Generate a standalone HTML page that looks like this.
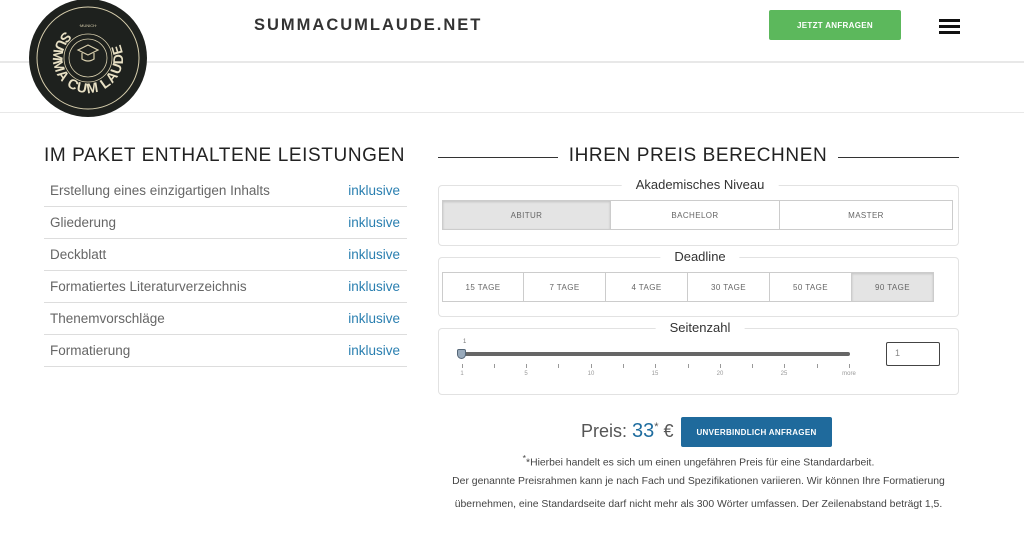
<!DOCTYPE html>
<html><head><meta charset="utf-8"><style>
*{margin:0;padding:0;box-sizing:border-box}
body{width:1024px;height:551px;background:#fff;font-family:"Liberation Sans",sans-serif;position:relative;overflow:hidden;color:#555}
.a{position:absolute}
.hl{position:absolute;left:0;width:1024px;height:2px;background:#e8e8e8}
.row{position:absolute;left:44px;width:363px;height:32px;border-bottom:1px solid #ddd;font-size:13.5px;color:#666}
.row span{position:absolute;left:6px;top:8px}
.row b{position:absolute;right:7px;top:8px;font-weight:normal;color:#2a7fb0}
.box{position:absolute;left:438px;width:521px;border:1px solid #e2e2e2;border-radius:4px}
.lg{position:absolute;background:#fff;font-size:13px;color:#333;padding:0 14px;transform:translateX(-50%);top:-9px;white-space:nowrap}
.btn{position:absolute;top:0;height:30px;border:1px solid #ccc;font-size:8px;letter-spacing:.4px;color:#666;display:flex;align-items:center;justify-content:center;background:#fff}
.on{background:#e4e4e4;box-shadow:inset 0 1px 2px rgba(0,0,0,.15)}
.tk{position:absolute;top:364px;width:1px;height:4px;background:#999}
.tl{position:absolute;top:371px;font-size:6px;color:#999;transform:translateX(-50%)}
.nt{position:absolute;left:428px;width:541px;text-align:center;font-size:10.4px;color:#444;white-space:nowrap}
</style></head><body>
<div class="hl" style="top:61px"></div>
<div class="hl" style="top:112px;height:1px"></div>
<svg class="a" style="left:28px;top:-2px" width="120" height="120" viewBox="0 0 120 120">
<defs><path id="cp" d="M60 60 m-35 0 a35 35 0 1 0 70 0 a35 35 0 1 0 -70 0"/></defs>
<circle cx="60" cy="60" r="59" fill="#1e211e"/>
<circle cx="60" cy="60" r="51" fill="none" stroke="#d8cfae" stroke-width="1"/>
<circle cx="60" cy="60" r="24" fill="none" stroke="#d8cfae" stroke-width="0.8"/>
<circle cx="60" cy="60" r="19" fill="none" stroke="#d8cfae" stroke-width="0.8"/>
<path d="M50 52 L60 47 L70 52 L60 57Z M54 55 v6 q6 4 12 0 v-6" fill="none" stroke="#d8cfae" stroke-width="1.2"/>
<text x="60" y="29" font-size="4" fill="#d8cfae" text-anchor="middle">·MUNICH·</text>
<text font-size="14" fill="#e8e0c4" font-weight="bold" letter-spacing="1" transform="rotate(50 60 60)"><textPath href="#cp">SUMMA CUM LAUDE</textPath></text>
</svg>
<div class="a" style="left:254px;top:16px;font-size:16.5px;font-weight:bold;letter-spacing:2px;color:#333">SUMMACUMLAUDE.NET</div>
<div class="a" style="left:769px;top:10px;width:132px;height:30px;background:#5cb85c;border-radius:2px;color:#fff;font-size:8px;font-weight:bold;display:flex;align-items:center;justify-content:center;letter-spacing:.3px">JETZT ANFRAGEN</div>
<div class="a" style="left:939px;top:19px;width:21px;height:3px;background:#111"></div>
<div class="a" style="left:939px;top:25px;width:21px;height:3px;background:#111"></div>
<div class="a" style="left:939px;top:31px;width:21px;height:3px;background:#111"></div>

<div class="a" style="left:44px;top:145px;font-size:19px;color:#222;letter-spacing:.6px">IM PAKET ENTHALTENE LEISTUNGEN</div>
<div class="row" style="top:175px"><span>Erstellung eines einzigartigen Inhalts</span><b>inklusive</b></div>
<div class="row" style="top:207px"><span>Gliederung</span><b>inklusive</b></div>
<div class="row" style="top:239px"><span>Deckblatt</span><b>inklusive</b></div>
<div class="row" style="top:271px"><span>Formatiertes Literaturverzeichnis</span><b>inklusive</b></div>
<div class="row" style="top:303px"><span>Thenemvorschläge</span><b>inklusive</b></div>
<div class="row" style="top:335px"><span>Formatierung</span><b>inklusive</b></div>

<div class="a" style="left:438px;top:157px;width:120px;height:1px;background:#333"></div>
<div class="a" style="left:838px;top:157px;width:121px;height:1px;background:#333"></div>
<div class="a" style="left:558px;top:145px;width:280px;text-align:center;font-size:19px;color:#222;letter-spacing:.6px">IHREN PREIS BERECHNEN</div>

<div class="box" style="top:185px;height:61px"><div class="lg" style="left:261px">Akademisches Niveau</div>
<div class="btn on" style="left:3px;top:14px;width:169px">ABITUR</div>
<div class="btn" style="left:171px;top:14px;width:170px">BACHELOR</div>
<div class="btn" style="left:340px;top:14px;width:174px">MASTER</div></div>

<div class="box" style="top:257px;height:60px"><div class="lg" style="left:261px">Deadline</div>
<div class="btn" style="left:3px;top:14px;width:82px">15 TAGE</div>
<div class="btn" style="left:84px;top:14px;width:83px">7 TAGE</div>
<div class="btn" style="left:166px;top:14px;width:83px">4 TAGE</div>
<div class="btn" style="left:248px;top:14px;width:83px">30 TAGE</div>
<div class="btn" style="left:330px;top:14px;width:83px">50 TAGE</div>
<div class="btn on" style="left:412px;top:14px;width:83px">90 TAGE</div></div>

<div class="box" style="top:328px;height:67px"><div class="lg" style="left:261px">Seitenzahl</div></div>
<div class="a" style="left:463px;top:339px;font-size:6px;color:#777">1</div>
<div class="a" style="left:459px;top:352px;width:391px;height:4px;background:#666;border-radius:2px"></div>
<div class="a" style="left:457px;top:349px;width:9px;height:10px;background:#9ab;border:1px solid #567;border-radius:2px 2px 5px 5px"></div>
<div class="tk" style="left:462px"></div><div class="tk" style="left:494px"></div><div class="tk" style="left:526px"></div><div class="tk" style="left:558px"></div><div class="tk" style="left:591px"></div><div class="tk" style="left:623px"></div><div class="tk" style="left:655px"></div><div class="tk" style="left:688px"></div><div class="tk" style="left:720px"></div><div class="tk" style="left:752px"></div><div class="tk" style="left:784px"></div><div class="tk" style="left:817px"></div><div class="tk" style="left:849px"></div>
<div class="tl" style="left:462px">1</div><div class="tl" style="left:526px">5</div><div class="tl" style="left:591px">10</div><div class="tl" style="left:655px">15</div><div class="tl" style="left:720px">20</div><div class="tl" style="left:784px">25</div><div class="tl" style="left:849px">more</div>
<div class="a" style="left:886px;top:342px;width:54px;height:24px;border:1px solid #444;border-radius:2px;font-size:9px;color:#888;padding:5px 0 0 8px">1</div>

<div class="a" style="left:581px;top:420px;font-size:18px;color:#555">Preis: <span style="color:#1f6d9f;font-size:20px">33</span><sup style="font-size:11px">*</sup> €</div>
<div class="a" style="left:681px;top:417px;width:151px;height:30px;background:#1f6a9c;border-radius:2px;color:#fff;font-size:8px;font-weight:bold;display:flex;align-items:center;justify-content:center;letter-spacing:.3px">UNVERBINDLICH ANFRAGEN</div>
<div class="nt" style="top:453px"><sup>*</sup>*Hierbei handelt es sich um einen ungefähren Preis für eine Standardarbeit.</div>
<div class="nt" style="top:476px">Der genannte Preisrahmen kann je nach Fach und Spezifikationen variieren. Wir können Ihre Formatierung</div>
<div class="nt" style="top:499px">übernehmen, eine Standardseite darf nicht mehr als 300 Wörter umfassen. Der Zeilenabstand beträgt 1,5.</div>
</body></html>
